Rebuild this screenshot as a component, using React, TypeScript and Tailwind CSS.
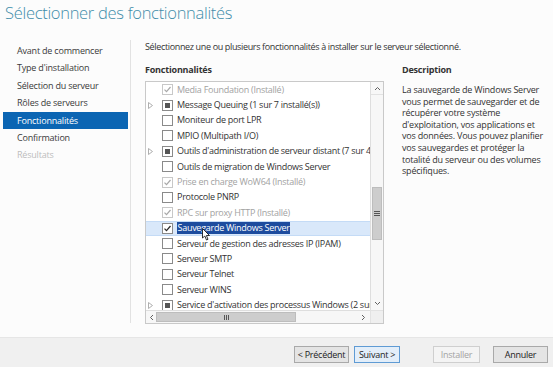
import React from "react";

type State = "installed" | "partial" | "none" | "checked";
type Row = { label: string; state: State; exp?: boolean; selected?: boolean };

const rows: Row[] = [
  { label: "Media Foundation (Installé)", state: "installed" },
  { label: "Message Queuing (1 sur 7 installé(s))", state: "partial", exp: true },
  { label: "Moniteur de port LPR", state: "none" },
  { label: "MPIO (Multipath I/O)", state: "none" },
  { label: "Outils d'administration de serveur distant (7 sur 40 installé(s))", state: "partial", exp: true },
  { label: "Outils de migration de Windows Server", state: "none" },
  { label: "Prise en charge WoW64 (Installé)", state: "installed" },
  { label: "Protocole PNRP", state: "none" },
  { label: "RPC sur proxy HTTP (Installé)", state: "installed" },
  { label: "Sauvegarde Windows Server", state: "checked", selected: true },
  { label: "Serveur de gestion des adresses IP (IPAM)", state: "none" },
  { label: "Serveur SMTP", state: "none" },
  { label: "Serveur Telnet", state: "none" },
  { label: "Serveur WINS", state: "none" },
  { label: "Service d'activation des processus Windows (2 sur 9 installé(s))", state: "partial", exp: true },
];

function Box({ state }: { state: State }) {
  const border = state === "installed" ? "#c8c8c8" : "#8a8a8a";
  return (
    <svg width="11" height="11" viewBox="0 0 11 11" className="shrink-0">
      <rect x="0.5" y="0.5" width="10" height="10" fill="#fff" stroke={border} />
      {state === "installed" && (
        <path d="M2.5 5.6 L4.5 7.6 L8.5 3" fill="none" stroke="#a8a8a8" strokeWidth="1.2" />
      )}
      {state === "checked" && (
        <path d="M2.5 5.6 L4.5 7.6 L8.5 3" fill="none" stroke="#2a2a2a" strokeWidth="1.3" />
      )}
      {state === "partial" && <rect x="3" y="3" width="5" height="5" fill="#555" />}
    </svg>
  );
}

function Expander() {
  return (
    <svg width="5" height="7" viewBox="0 0 5 7">
      <path d="M0.5 0.5 L4.5 3.5 L0.5 6.5 Z" fill="none" stroke="#a6a6a6" strokeWidth="0.9" />
    </svg>
  );
}

const nav = [
  "Avant de commencer",
  "Type d'installation",
  "Sélection du serveur",
  "Rôles de serveurs",
  "Fonctionnalités",
  "Confirmation",
  "Résultats",
];

function Btn({
  children,
  variant,
  w,
}: {
  children: React.ReactNode;
  variant: "normal" | "default" | "disabled";
  w: string;
}) {
  const cls =
    variant === "default"
      ? "border-[#5f9bd4] bg-[#e3eef9] text-[#222]"
      : variant === "disabled"
      ? "border-[#cfcfcf] bg-[#f4f4f4] text-[#a3a3a3]"
      : "border-[#a9a9a9] bg-[#e4e4e4] text-[#222]";
  return (
    <div
      className={`h-[17px] ${w} border ${cls} flex items-center justify-center text-[9px] tracking-[-0.25px] leading-none whitespace-nowrap`}
    >
      {children}
    </div>
  );
}

export default function App() {
  return (
    <div
      className="w-[553px] h-[367px] flex flex-col overflow-hidden text-[#333]"
      style={{ fontFamily: '"Open Sans", "Noto Sans", sans-serif' }}
    >
      <div className="h-[338px] bg-[#fcfcfc] border-b border-[#e6e6e6] flex flex-col">
        <div className="pl-[5px] pt-[1px] h-[40px] text-[16.5px] tracking-[-0.3px] leading-[24px] font-light text-[#3f8daa] whitespace-nowrap">
          Sélectionner des fonctionnalités
        </div>
        <div className="flex">
          <div className="w-[131px] h-[283px] border-r border-[#e2e2e2] pl-[3px] pr-[2px] pt-[2px]">
            {nav.map((n) => {
              const sel = n === "Fonctionnalités";
              const dim = n === "Résultats";
              return (
                <div
                  key={n}
                  className={`h-[17.4px] flex items-center pl-[14px] text-[9px] tracking-[-0.2px] whitespace-nowrap ${
                    sel ? "bg-[#0b65b3] text-white" : dim ? "text-[#bdbdbd]" : "text-[#3a3a3a]"
                  }`}
                >
                  {n}
                </div>
              );
            })}
          </div>
          <div className="pl-[14px] flex flex-col">
            <div className="h-[13px] text-[9px] tracking-[-0.35px] leading-[13px] whitespace-nowrap">
              Sélectionnez une ou plusieurs fonctionnalités à installer sur le serveur sélectionné.
            </div>
            <div className="flex mt-[11px]">
              <div className="flex flex-col w-[239px]">
                <div className="h-[12px] text-[9px] tracking-[-0.2px] leading-[12px] font-bold text-[#333]">
                  Fonctionnalités
                </div>
                <div className="mt-[5px] w-[239px] h-[243px] border border-[#c9c9c9] bg-white grid grid-cols-[224px_13px] grid-rows-[228px_13px]">
                  <div className="overflow-hidden relative">
                    {rows.map((r, i) => (
                      <div
                        key={i}
                        className={`h-[15.4px] flex items-center whitespace-nowrap ${
                          r.selected ? "bg-[#d9e8fa] border-y border-[#c4dbf6]" : ""
                        }`}
                      >
                        <div className="w-[16px] shrink-0 flex items-center pl-[2px]">
                          {r.exp && <Expander />}
                        </div>
                        <Box state={r.state} />
                        <span
                          className={`ml-[4px] text-[9px] tracking-[-0.27px] leading-[12px] ${
                            r.selected
                              ? "bg-[#1d4c9e] text-white px-[0.5px]"
                              : r.state === "installed"
                              ? "text-[#a2a2a2]"
                              : "text-[#333]"
                          }`}
                        >
                          {r.label}
                        </span>
                      </div>
                    ))}
                    <svg
                      className="absolute left-[56px] top-[146px]"
                      width="9"
                      height="13"
                      viewBox="0 0 9 13"
                    >
                      <path
                        d="M0.5 0.5 L0.5 10 L2.8 8 L4.5 12 L6 11.3 L4.4 7.5 L7.5 7.5 Z"
                        fill="#fff"
                        stroke="#000"
                        strokeWidth="0.8"
                      />
                    </svg>
                  </div>
                  <div className="bg-[#f7f7f7] border-l border-[#dedede] flex flex-col items-stretch">
                    <div className="h-[13px] border-b border-[#e2e2e2] flex items-center justify-center">
                      <svg width="7" height="5" viewBox="0 0 7 5">
                        <path d="M1 4 L3.5 1.5 L6 4" fill="none" stroke="#606060" strokeWidth="1" />
                      </svg>
                    </div>
                    <div className="h-[92px]" />
                    <div className="h-[53px] mx-[1px] bg-[#cdcdcd] border border-[#bdbdbd] flex flex-col items-center justify-center gap-[1px]">
                      <div className="w-[6px] h-[1px] bg-[#555]" />
                      <div className="w-[6px] h-[1px] bg-[#555]" />
                      <div className="w-[6px] h-[1px] bg-[#555]" />
                    </div>
                    <div className="flex-1" />
                    <div className="h-[13px] flex items-center justify-center">
                      <svg width="7" height="5" viewBox="0 0 7 5">
                        <path d="M1 1 L3.5 3.5 L6 1" fill="none" stroke="#606060" strokeWidth="1" />
                      </svg>
                    </div>
                  </div>
                  <div className="bg-[#f7f7f7] border-t border-[#dedede] flex items-stretch">
                    <div className="w-[10px] flex items-center justify-center">
                      <svg width="5" height="7" viewBox="0 0 5 7">
                        <path d="M4 1 L1.5 3.5 L4 6" fill="none" stroke="#606060" strokeWidth="1" />
                      </svg>
                    </div>
                    <div className="w-[140px] my-[1px] bg-[#cdcdcd] border border-[#bdbdbd] flex items-center justify-center gap-[1px]">
                      <div className="w-[1px] h-[5px] bg-[#555]" />
                      <div className="w-[1px] h-[5px] bg-[#555]" />
                      <div className="w-[1px] h-[5px] bg-[#555]" />
                    </div>
                    <div className="flex-1" />
                    <div className="w-[13px] flex items-center justify-center">
                      <svg width="5" height="7" viewBox="0 0 5 7">
                        <path d="M1 1 L3.5 3.5 L1 6" fill="none" stroke="#606060" strokeWidth="1" />
                      </svg>
                    </div>
                  </div>
                  <div className="bg-[#efefef] border-t border-l border-[#e2e2e2]" />
                </div>
              </div>
              <div className="ml-[18px] flex flex-col">
                <div className="h-[12px] text-[9px] tracking-[-0.2px] leading-[12px] font-bold text-[#333]">
                  Description
                </div>
                <div className="mt-[8px] text-[9px] tracking-[-0.2px] leading-[11.6px] text-[#333] whitespace-nowrap">
                  <div>La sauvegarde de Windows Server</div>
                  <div>vous permet de sauvegarder et de</div>
                  <div>récupérer votre système</div>
                  <div>d'exploitation, vos applications et</div>
                  <div>vos données. Vous pouvez planifier</div>
                  <div>vos sauvegardes et protéger la</div>
                  <div>totalité du serveur ou des volumes</div>
                  <div>spécifiques.</div>
                </div>
              </div>
            </div>
          </div>
        </div>
      </div>
      <div className="flex-1 bg-[#f0f0f0] flex items-start justify-end pt-[8px] pr-[5px]">
        <Btn variant="normal" w="w-[55px]">&lt; Précédent</Btn>
        <div className="ml-[5px]">
          <Btn variant="default" w="w-[46px]">Suivant &gt;</Btn>
        </div>
        <div className="ml-[33px]">
          <Btn variant="disabled" w="w-[47px]">Installer</Btn>
        </div>
        <div className="ml-[13px]">
          <Btn variant="normal" w="w-[55px]">Annuler</Btn>
        </div>
      </div>
    </div>
  );
}
